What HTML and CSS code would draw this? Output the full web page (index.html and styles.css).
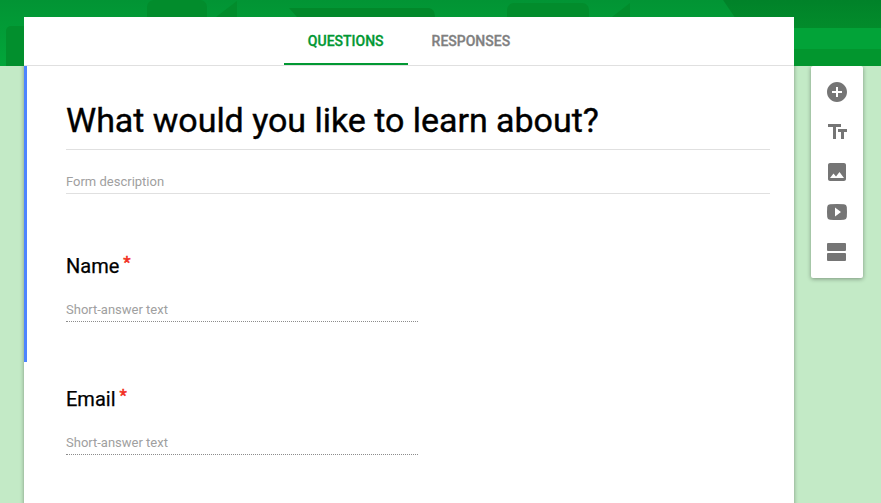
FILE: index.html
```
<!DOCTYPE html>
<html lang="en">
<head>
  <meta charset="UTF-8">
  <meta name="viewport" content="width=device-width, initial-scale=1.0">
  <title>What would you like to learn about?</title>
  <link rel="stylesheet" href="styles.css">
</head>
<body>
  <!-- Header art behind the form -->
  <svg class="banner" viewBox="0 0 881 66" aria-hidden="true">
    <defs>
      <linearGradient id="base" x1="0" y1="0" x2="0" y2="1">
        <stop offset="0" stop-color="#029434"/>
        <stop offset="1" stop-color="#02a63a"/>
      </linearGradient>
      <linearGradient id="shade" x1="0" y1="0" x2="0" y2="1">
        <stop offset="0" stop-color="#018229"/>
        <stop offset="1" stop-color="#028c2b"/>
      </linearGradient>
    </defs>
    <rect width="881" height="66" fill="url(#base)"/>
    <rect x="6" y="26" width="40" height="60" rx="5" fill="#028f2d"/>
    <rect x="147" y="0" width="60" height="30" rx="7" fill="#028c2c"/>
    <path d="M216 17 237 1v16z" fill="#028c2c"/>
    <path d="M289 8h140q6 1 6 9H297z" fill="#02882a"/>
    <rect x="507" y="3" width="82" height="30" rx="7" fill="#028c2c"/>
    <path d="M612 17 630 3v14z" fill="#028c2c"/>
    <path d="M723 0h158v28H742z" fill="url(#shade)"/>
    <rect x="794" y="28" width="87" height="21" fill="#02a338"/>
    <rect x="794" y="49" width="87" height="17" fill="#02962e"/>
  </svg>

  <div class="page">
    <main class="form">
      <nav class="tabs">
        <a class="tab active">QUESTIONS</a>
        <a class="tab">RESPONSES</a>
      </nav>

      <section class="section selected">
        <h1 class="title">What would you like to learn about?</h1>
        <div class="description">Form description</div>
        <div class="question">
          <h2 class="label">Name <span class="required">*</span></h2>
          <div class="answer">Short-answer text</div>
        </div>
      </section>

      <section class="section">
        <div class="question">
          <h2 class="label">Email <span class="required">*</span></h2>
          <div class="answer">Short-answer text</div>
        </div>
      </section>
    </main>

    <!-- Add item toolbar -->
    <aside class="toolbar">
      <svg class="icon" viewBox="0 0 24 24"><path d="M12 2C6.480 2 2 6.480 2 12s4.480 10 10 10 10-4.480 10-10S17.520 2 12 2zm5 11h-4v4h-2v-4H7v-2h4V7h2v4h4v2z"/></svg>
      <svg class="icon" viewBox="0 0 24 24"><path d="M3 4h13v3h-5v12H8V7H3zM13 9h9v3h-3v7h-3v-7h-3z"/></svg>
      <svg class="icon" viewBox="0 0 24 24"><path d="M21 19V5c0-1.100-.9-2-2-2H5c-1.100 0-2 .9-2 2v14c0 1.100.9 2 2 2h14c1.100 0 2-.9 2-2zM5 18l3.500-4.500 2.500 3 3.500-4.500L19 18H5z"/></svg>
      <svg class="icon" viewBox="0 0 24 24"><path d="M5 4.300Q12 3.700 19 4.300Q21.600 4.500 21.800 7Q22.200 12 21.800 17Q21.600 19.500 19 19.700Q12 20.300 5 19.700Q2.400 19.500 2.200 17Q1.800 12 2.200 7Q2.400 4.500 5 4.300zM10 7.500v9l6-4.500z"/></svg>
      <svg class="icon" viewBox="0 0 24 24"><path d="M3 3h17q1 0 1 1v6q0 1-1 1H3q-1 0-1-1V4q0-1 1-1zM3 13h17q1 0 1 1v6q0 1-1 1H3q-1 0-1-1v-6q0-1 1-1z"/></svg>
    </aside>
  </div>
</body>
</html>
```
FILE: styles.css
```
* {
  box-sizing: border-box;
}
body {
  margin: 0;
  height: 503px;
  overflow: hidden;
  background: #c3eac6;
  font-family: Roboto, "Liberation Sans", sans-serif;
  color: #000;
}
.banner {
  position: absolute;
  top: 0;
  left: 0;
  width: 881px;
  height: 66px;
  z-index: -1;
}
.page {
  display: flex;
  align-items: flex-start;
  gap: 17px;
  padding: 17px 18px 0 24px;
}
.form {
  width: 770px;
  height: 500px;
  background: #fff;
  box-shadow: 0 1px 4px rgba(0, 0, 0, 0.37);
  clip-path: polygon(0 0, 100% 0, 100% 49px, 776px 49px, 776px 100%, -6px 100%, -6px 49px, 0 49px);
}
.tabs {
  display: flex;
  justify-content: center;
  height: 49px;
  border-bottom: 1px solid #e0e0e0;
}
.tab {
  padding: 0 24px;
  line-height: 48px;
  font-size: 14px;
  font-weight: 500;
  color: #808080;
  -webkit-text-stroke: 0.3px;
}
.tab.active {
  color: #029833;
  border-bottom: 2px solid #029833;
}
.section {
  padding: 0 24px 0 39px;
  border-left: 3px solid transparent;
}
.section.selected {
  height: 296px;
  padding-top: 30px;
  border-left-color: #4d84ff;
}
.title {
  margin: 0;
  height: 54px;
  border-bottom: 1px solid #e0e0e0;
  font-size: 34px;
  font-weight: 400;
  line-height: 48px;
  letter-spacing: -0.03px;
  -webkit-text-stroke: 0.4px;
}
.description {
  height: 44px;
  padding-top: 22px;
  border-bottom: 1px solid #e0e0e0;
  font-size: 13px;
  line-height: 20px;
  color: #a0a0a0;
}
.question {
  padding-top: 58px;
}
.section:last-child .question {
  padding-top: 23px;
}
.label {
  margin: 0;
  height: 28px;
  font-size: 20px;
  font-weight: 400;
  line-height: 28px;
  -webkit-text-stroke: 0.25px;
}
.required {
  margin-left: -1px;
  font-size: 17px;
  color: #f22d20;
  vertical-align: 5px;
  line-height: 1;
  -webkit-text-stroke: 0.5px;
}
.answer {
  width: 352px;
  height: 42px;
  padding-top: 20px;
  border-bottom: 1px dotted #8c8c8c;
  font-size: 13px;
  line-height: 20px;
  color: #a0a0a0;
}
.toolbar {
  display: flex;
  flex-direction: column;
  gap: 16px;
  width: 52px;
  height: 212px;
  margin-top: 49px;
  padding: 14px;
  background: #fff;
  border-radius: 2px;
  box-shadow: 0 1px 4px rgba(0, 0, 0, 0.37);
  clip-path: inset(0 -6px -8px -6px);
}
.icon {
  width: 24px;
  height: 24px;
  fill: #757575;
  fill-rule: evenodd;
}
```
